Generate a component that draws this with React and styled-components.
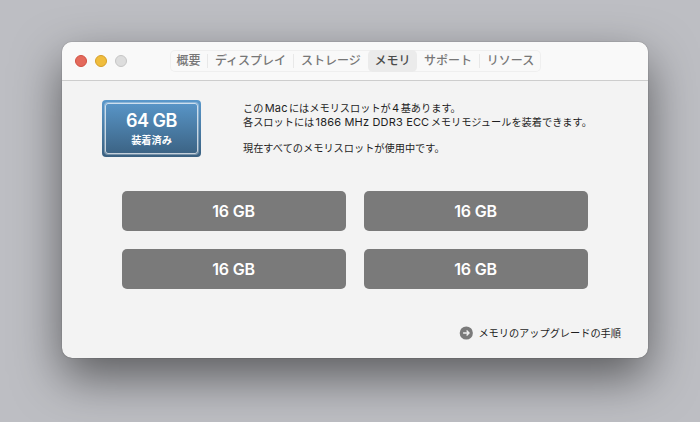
import React from 'react'
import styled, { createGlobalStyle } from 'styled-components';


const GlobalStyle = createGlobalStyle`
  * {
    box-sizing: border-box;
  }
  body {
    margin: 0;
    background-color: #bdbec3;
    font-family: Inter, "Noto Sans CJK JP", sans-serif;
  }
`

const Container = styled.div`
  height: 422px;
  padding: 42px 52px 64px 62px;
  overflow: hidden;
`

const Window = styled.div`
  display: flex;
  flex-direction: column;
  height: 316px;
  border-radius: 10px;
  overflow: hidden;
  background-color: #f3f3f3;
  box-shadow: 0 0 1px rgba(0, 0, 0, 0.65), 0 19px 48px rgba(0, 0, 0, 0.52);
`

const TitleBar = styled.div`
  display: flex;
  height: 39px;
  padding: 8px 13px 0;
  background-color: #f9f9f9;
  border-bottom: 1px solid #cdcdcd;
`

const Lights = styled.div`
  display: flex;
  gap: 8px;
  width: 95px;
  padding-top: 5px;
`

const Light = styled.span`
  width: 12px;
  height: 12px;
  border-radius: 50%;
  background-color: ${props => props.$fill};
  border: 1px solid ${props => props.$edge};
`

const Tabs = styled.div`
  display: flex;
  align-items: center;
  height: 22px;
  border-radius: 5px;
  box-shadow: inset 0 0 0 1px #efefef;
`

const Tab = styled.div`
  display: flex;
  align-items: center;
  justify-content: center;
  width: ${props => props.$width}px;
  height: 22px;
  padding: 0 0 3px;
  border-radius: 5px;
  font-size: 12px;
  font-weight: 500;
  white-space: nowrap;
  color: ${props => props.$active ? '#4a4a4a' : '#777'};
  background-color: ${props => props.$active ? '#ebebeb' : 'transparent'};
`

const Separator = styled.span`
  width: 1px;
  height: 14px;
  background-color: #e8e8e8;
`

const Summary = styled.div`
  display: flex;
  padding: 19px 0 0 40px;
`

const Badge = styled.div`
  width: 99px;
  height: 57px;
  padding: 3px;
  border-radius: 4px;
  background: linear-gradient(#5a98cb, #3a6080);
`

const BadgeInner = styled.div`
  display: flex;
  flex-direction: column;
  align-items: center;
  height: 51px;
  border: 1px solid rgba(255, 255, 255, 0.7);
  border-radius: 3px;
  box-shadow: 0 0 0 1px rgba(255, 255, 255, 0.3);
  color: #fff;
`

const Total = styled.div`
  margin-top: 6px;
  font-size: 18px;
  font-weight: 600;
  line-height: 22px;
  letter-spacing: -0.5px;
`

const Installed = styled.div`
  margin-top: 1px;
  font-size: 10.2px;
  font-weight: 700;
  line-height: 15px;
`

const Info = styled.div`
  margin-left: 42px;
  padding-top: 1px;
  color: #1e1e1e;
`

const Line = styled.p`
  margin: 0 0 ${props => props.$gap || 0}px;
  font-size: 10.2px;
  line-height: 14px;
  white-space: nowrap;
`

const Latin = styled.span`
  margin: 0 1.3px;
  font-size: 11px;
  letter-spacing: 0.17px;
`

const Slots = styled.div`
  display: grid;
  grid-template-columns: 224px 224px;
  gap: 18px;
  padding: 34px 0 0 60px;
`

const Slot = styled.div`
  display: flex;
  align-items: center;
  justify-content: center;
  height: 40px;
  padding-right: 1px;
  border-radius: 5px;
  background-color: #7a7a7a;
  color: #fff;
  font-size: 16px;
  font-weight: 600;
  letter-spacing: -0.2px;
`

const Footer = styled.div`
  display: flex;
  align-items: center;
  justify-content: flex-end;
  gap: 5px;
  margin-top: 36px;
  padding-right: 27px;
  height: 15px;
  font-size: 10.2px;
  color: #1e1e1e;
`

const FooterText = styled.span`
  padding-top: 1px;
  line-height: 15px;
`

const tabs = [
  { name: '概要', width: 37 },
  { name: 'ディスプレイ', width: 85, line: true },
  { name: 'ストレージ', width: 74, line: true },
  { name: 'メモリ', width: 49, active: true },
  { name: 'サポート', width: 62 },
  { name: 'リソース', width: 61, line: true },
]

const slots = ['16 GB', '16 GB', '16 GB', '16 GB']

const ArrowIcon = () => (
  <svg width="14" height="14" viewBox="0 0 14 14">
    <circle cx="7.3" cy="7" r="6.6" fill="#7a7a7a" />
    <path d="M4.1 7h6M7.6 4.6L10 7L7.6 9.4" fill="none" stroke="#f0f0f0" strokeWidth="1.4" />
  </svg>
)

const App = () => {
  return (
    <Container>
      <GlobalStyle/>
      <Window>
        <TitleBar>
          <Lights>
            <Light $fill="#e46a5c" $edge="#d15143"/>
            <Light $fill="#f0bd3d" $edge="#d6a029"/>
            <Light $fill="#dddddd" $edge="#c6c6c6"/>
          </Lights>
          <Tabs>
            {tabs.map(tab => (
              <React.Fragment key={tab.name}>
                {tab.line && <Separator/>}
                <Tab $width={tab.width} $active={tab.active}>{tab.name}</Tab>
              </React.Fragment>
            ))}
          </Tabs>
        </TitleBar>
        <Summary>
          <Badge>
            <BadgeInner>
              <Total>64 GB</Total>
              <Installed>装着済み</Installed>
            </BadgeInner>
          </Badge>
          <Info>
            <Line>この<Latin>Mac</Latin>にはメモリスロットが<Latin>4</Latin>基あります。</Line>
            <Line $gap={12}>各スロットには<Latin>1866 MHz DDR3 ECC</Latin>メモリモジュールを装着できます。</Line>
            <Line>現在すべてのメモリスロットが使用中です。</Line>
          </Info>
        </Summary>
        <Slots>
          {slots.map((size, i) => <Slot key={i}>{size}</Slot>)}
        </Slots>
        <Footer>
          <ArrowIcon/>
          <FooterText>メモリのアップグレードの手順</FooterText>
        </Footer>
      </Window>
    </Container>
  )
}

export default App;
